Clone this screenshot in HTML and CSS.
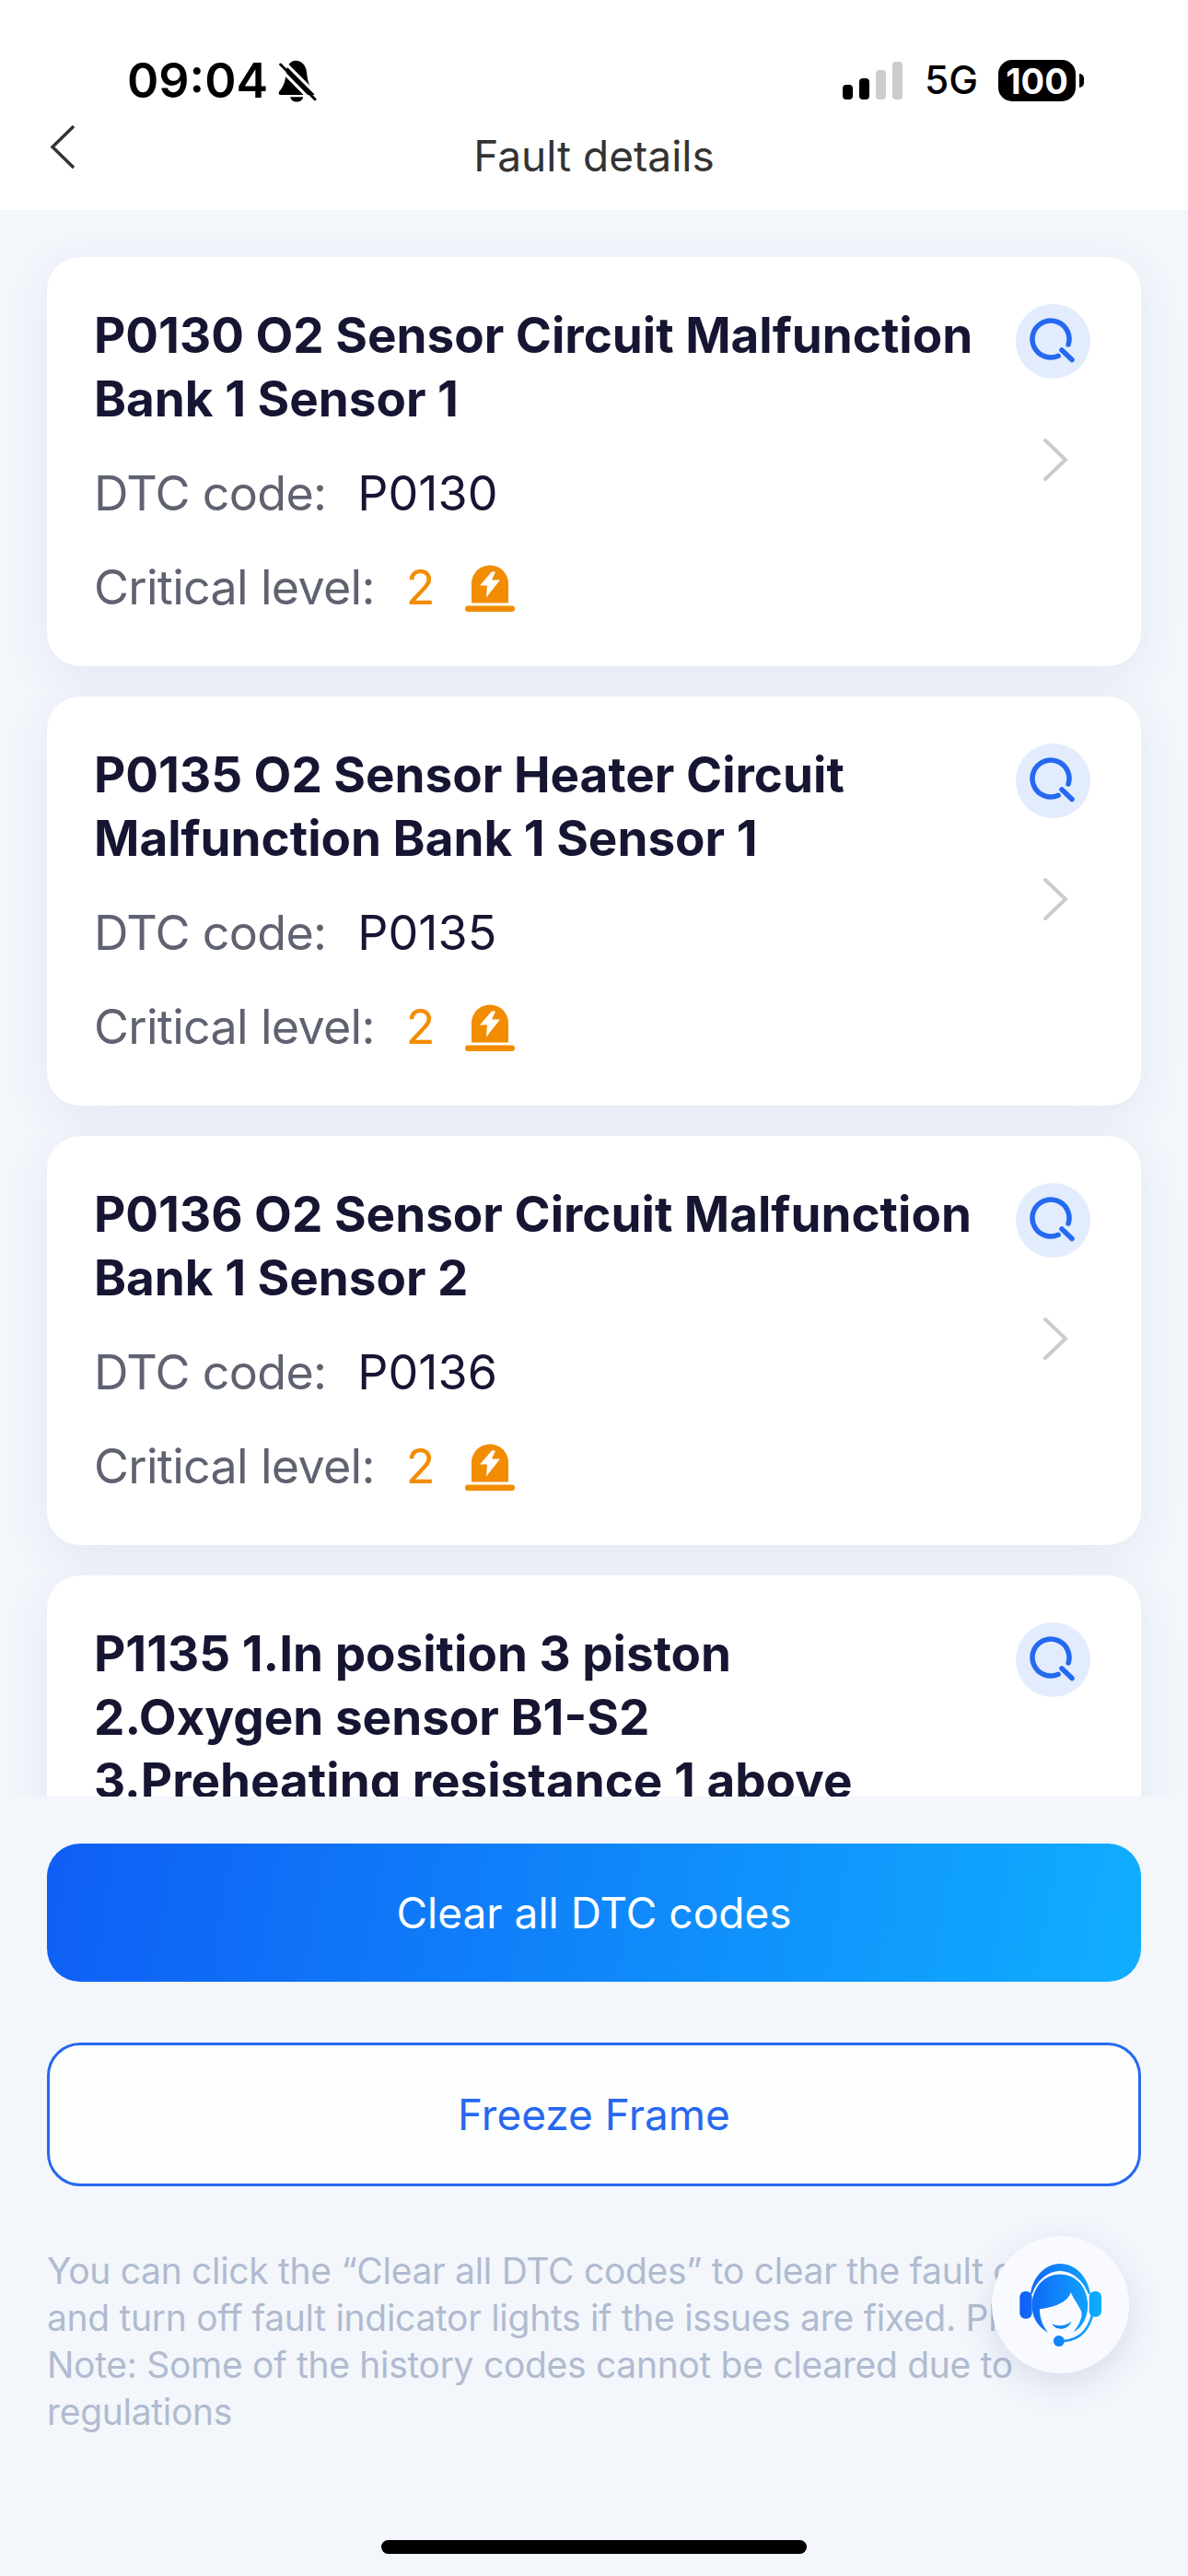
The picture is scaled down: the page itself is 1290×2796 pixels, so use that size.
FILE: index.html
```html
<!DOCTYPE html>
<html lang="en">
<head>
<meta charset="utf-8">
<title>Fault details</title>
<link rel="stylesheet" href="styles.css">
</head>
<body>
<svg class="defs" width="0" height="0" aria-hidden="true">
  <symbol id="i-search" viewBox="0 0 81 81">
    <circle cx="38" cy="38" r="20" fill="none" stroke="#2469f0" stroke-width="5.5" stroke-linecap="round" stroke-dasharray="108 18" transform="rotate(66 38 38)"/>
    <path d="M50 50 L61 60.5" fill="none" stroke="#2469f0" stroke-width="5.5" stroke-linecap="round"/>
  </symbol>
  <symbol id="i-chevron" viewBox="0 0 28 48">
    <path d="M3 3 L25 24 L3 45" fill="none" stroke="#cccccc" stroke-width="4" stroke-linecap="round" stroke-linejoin="miter"/>
  </symbol>
  <symbol id="i-alarm" viewBox="0 0 54 50">
    <path d="M7 41 V20 A20 20 0 0 1 47 20 V41 Z" fill="#f28c00"/>
    <path d="M29 7 L16 22 H24 L23 35 L38 16 H29 L33 7 Z" fill="#fff"/>
    <rect x="0" y="44" width="54" height="6.5" rx="3.2" fill="#f28c00"/>
  </symbol>
</svg>

<div class="screen">
  <header class="top">
    <div class="status">
      <div class="status-left">
        <span class="time">09:04</span>
        <svg class="bell" viewBox="545 40 130 145" aria-hidden="true">
          <path d="M605 45 C622 45 640 58 642 85 C645 115 650 130 668 150 C670 155 668 158 662 158 H556 C550 158 548 152 552 146 C566 130 572 112 574 85 C576 60 590 45 605 45 Z" fill="#000"/>
          <path d="M588 165 H630 C628 186 590 186 588 165 Z" fill="#000"/>
          <path d="M548 66 L660 180" stroke="#fff" stroke-width="10" fill="none"/>
          <path d="M556 58 L669 172" stroke="#000" stroke-width="9" stroke-linecap="round" fill="none"/>
          <path d="M566 48 L680 162" stroke="#fff" stroke-width="10" fill="none"/>
        </svg>
      </div>
      <div class="status-right">
        <div class="signal">
          <i class="bar b1"></i><i class="bar b2"></i><i class="bar b3"></i><i class="bar b4"></i>
        </div>
        <span class="net">5G</span>
        <div class="battery"><span class="level">100</span></div>
        <i class="nub"></i>
      </div>
    </div>
    <nav class="nav">
      <svg class="back" viewBox="0 0 26 48" aria-hidden="true">
        <path d="M25 1 L2 23.5 L25 46" fill="none" stroke="#333" stroke-width="3.4"/>
      </svg>
      <h1 class="nav-title">Fault details</h1>
    </nav>
  </header>

  <main class="list">
    <article class="card">
      <div class="card-body">
        <h2 class="card-title">P0130 O2 Sensor Circuit Malfunction Bank 1 Sensor 1</h2>
        <p class="row"><span class="label">DTC code:</span><span class="value">P0130</span></p>
        <p class="row"><span class="label">Critical level:</span><span class="level-num">2</span><svg class="alarm"><use href="#i-alarm"/></svg></p>
      </div>
      <div class="card-side">
        <span class="search"><svg class="search-icon"><use href="#i-search"/></svg></span>
        <svg class="chevron"><use href="#i-chevron"/></svg>
      </div>
    </article>

    <article class="card">
      <div class="card-body">
        <h2 class="card-title">P0135 O2 Sensor Heater Circuit Malfunction Bank 1 Sensor 1</h2>
        <p class="row"><span class="label">DTC code:</span><span class="value">P0135</span></p>
        <p class="row"><span class="label">Critical level:</span><span class="level-num">2</span><svg class="alarm"><use href="#i-alarm"/></svg></p>
      </div>
      <div class="card-side">
        <span class="search"><svg class="search-icon"><use href="#i-search"/></svg></span>
        <svg class="chevron"><use href="#i-chevron"/></svg>
      </div>
    </article>

    <article class="card">
      <div class="card-body">
        <h2 class="card-title">P0136 O2 Sensor Circuit Malfunction Bank 1 Sensor 2</h2>
        <p class="row"><span class="label">DTC code:</span><span class="value">P0136</span></p>
        <p class="row"><span class="label">Critical level:</span><span class="level-num">2</span><svg class="alarm"><use href="#i-alarm"/></svg></p>
      </div>
      <div class="card-side">
        <span class="search"><svg class="search-icon"><use href="#i-search"/></svg></span>
        <svg class="chevron"><use href="#i-chevron"/></svg>
      </div>
    </article>

    <article class="card">
      <div class="card-body">
        <h2 class="card-title">P1135 1.In position 3 piston<br>2.Oxygen sensor B1-S2<br>3.Preheating resistance 1 above</h2>
      </div>
      <div class="card-side">
        <span class="search"><svg class="search-icon"><use href="#i-search"/></svg></span>
      </div>
    </article>
  </main>

  <footer class="actions">
    <button class="btn btn-primary" type="button">Clear all DTC codes</button>
    <button class="btn btn-outline" type="button">Freeze Frame</button>
    <p class="note">You can click the “Clear all DTC codes” to clear the fault codes and turn off fault indicator lights if the issues are fixed. Please Note: Some of the history codes cannot be cleared due to regulations</p>
  </footer>

  <div class="fab">
    <svg class="fab-icon" viewBox="190 160 295 295" aria-hidden="true">
      <defs>
        <linearGradient id="hs" gradientUnits="userSpaceOnUse" x1="203" y1="0" x2="470" y2="0">
          <stop offset="0" stop-color="#0f5ef5"/>
          <stop offset="1" stop-color="#10aeff"/>
        </linearGradient>
      </defs>
      <path d="M238 270 C248 205 295 172 335 172 C378 172 422 205 434 270 L428 272 C410 225 375 197 335 195 C295 197 258 225 243 272 Z" fill="url(#hs)"/>
      <rect x="203" y="262" width="40" height="90" rx="18" fill="url(#hs)"/>
      <rect x="430" y="262" width="40" height="84" rx="18" fill="url(#hs)"/>
      <path d="M243 300 C250 240 290 207 335 207 C380 207 420 240 425 300 C428 340 410 380 378 396 C395 375 408 350 405 330 C395 305 380 290 370 265 C360 300 310 315 268 320 C268 350 280 380 297 398 C262 380 240 345 243 300 Z" fill="url(#hs)"/>
      <path d="M308 368 C325 378 350 378 372 361 C360 392 320 392 308 368 Z" fill="url(#hs)"/>
      <path d="M440 340 C425 395 395 420 345 425" fill="none" stroke="url(#hs)" stroke-width="8"/>
      <circle cx="331" cy="425" r="18" fill="url(#hs)"/>
    </svg>
  </div>

  <div class="home"></div>
</div>
</body>
</html>
```
FILE: styles.css
```css
* { box-sizing: border-box; }
html, body { margin: 0; padding: 0; }
body {
  width: 1290px;
  height: 2796px;
  overflow: hidden;
  background: #f3f6fb;
  font-family: Inter, "Liberation Sans", sans-serif;
}
.defs { position: absolute; }
.screen {
  position: relative;
  width: 1290px;
  height: 2796px;
  display: flex;
  flex-direction: column;
  background: #f3f6fb;
}

/* header */
.top {
  height: 228px;
  background: #fff;
  flex: none;
}
.status {
  height: 125px;
  padding: 50px 113px 0 138px;
  display: flex;
  justify-content: space-between;
  align-items: center;
  color: #000;
}
.status-left { display: flex; align-items: center; gap: 10px; }
.time { font-size: 52px; font-weight: 600; line-height: 1; }
.bell { width: 43px; height: 48px; }
.status-right { display: flex; align-items: center; }
.signal { display: flex; align-items: flex-end; gap: 7px; height: 41px; margin-right: 24px; }
.bar { display: block; width: 11px; border-radius: 4px; background: #000; }
.b1 { height: 16px; }
.b2 { height: 23px; }
.b3 { height: 32px; background: #ccc; }
.b4 { height: 41px; background: #ccc; }
.net { font-size: 42.5px; font-weight: 500; line-height: 1; margin-right: 22px; }
.battery {
  width: 84px;
  height: 45px;
  border-radius: 15px;
  background: #000;
  color: #fff;
  display: flex;
  align-items: center;
  justify-content: center;
}
.level { font-size: 38px; font-weight: 700; line-height: 1; }
.nub {
  display: block;
  width: 5px;
  height: 15px;
  margin-left: 4px;
  background: #000;
  border-radius: 0 8px 8px 0;
}
.nav {
  height: 103px;
  display: grid;
  grid-template-columns: 1fr auto 1fr;
  padding: 0 55px;
}
.back { width: 26px; height: 48px; margin-top: 11px; }
.nav-title {
  margin: 20px 0 0;
  font-size: 46px;
  font-weight: 400;
  line-height: 48px;
  color: #333;
}

/* list */
.list {
  flex: none;
  height: 1722px;
  padding: 51px 51px 0;
  overflow: hidden;
  display: flex;
  flex-direction: column;
  gap: 33px;
}
.card {
  flex: none;
  height: 444px;
  display: flex;
  background: #fff;
  border-radius: 36px;
  box-shadow: 0 12px 48px rgba(60, 90, 170, 0.09);
}
.card-body { flex: 1; min-width: 0; padding: 51px 0 0 51px; }
.card-title {
  margin: 0 0 17px;
  font-size: 53px;
  font-weight: 700;
  line-height: 69px;
  color: #161633;
}
.row {
  margin: 0;
  display: flex;
  align-items: center;
  height: 102px;
  font-size: 52px;
  letter-spacing: -0.7px;
  line-height: 62px;
  color: #5f6270;
}
.label { color: #5f6270; }
.value { margin-left: 34px; letter-spacing: 0; color: #161633; }
.level-num { margin-left: 34px; color: #f28c00; }
.alarm { width: 54px; height: 51px; margin-left: 33px; }
.card-side {
  flex: none;
  width: 136px;
  padding: 51px 55px 0 0;
  display: flex;
  flex-direction: column;
  align-items: center;
}
.search {
  display: block;
  width: 81px;
  height: 81px;
  border-radius: 50%;
  background: #e2ecfd;
}
.search-icon { display: block; width: 81px; height: 81px; }
.chevron { width: 28px; height: 48px; margin-top: 64px; margin-left: 4px; }

/* footer */
.actions { flex: none; padding: 51px 51px 0; }
.btn {
  display: block;
  width: 100%;
  border-radius: 36px;
  font-family: inherit;
  font-size: 46px;
  font-weight: 400;
  padding: 0;
}
.btn-primary {
  height: 150px;
  border: 0;
  color: #fff;
  background: linear-gradient(100deg, #0f5ef5, #10aeff);
}
.btn-outline {
  height: 156px;
  margin-top: 66px;
  border: 3px solid #2768f0;
  color: #2768f0;
  background: #fdfefe;
}
.note {
  margin: 66px 0 0;
  font-size: 39px;
  letter-spacing: -0.3px;
  line-height: 51px;
  color: #b0bbd0;
}

/* overlays */
.fab {
  position: absolute;
  left: 1077px;
  top: 2427px;
  width: 149px;
  height: 149px;
  border-radius: 50%;
  background: #f8faff;
  box-shadow: 0 10px 36px rgba(70, 90, 150, 0.16);
  display: flex;
  align-items: center;
  justify-content: center;
}
.fab-icon { width: 98px; height: 98px; }
.home {
  position: absolute;
  left: 414px;
  bottom: 24px;
  width: 462px;
  height: 15px;
  border-radius: 8px;
  background: #000;
}
```
